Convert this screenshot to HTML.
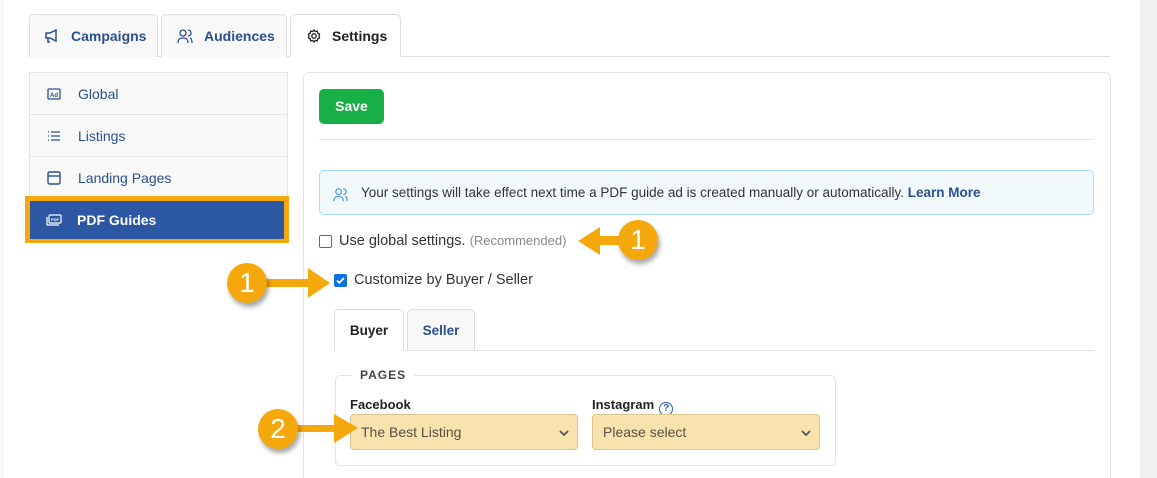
<!DOCTYPE html>
<html style="width:1157px;height:478px;overflow:hidden"><head><style>
*{box-sizing:border-box}
body{margin:0;width:1157px;height:478px;overflow:hidden;background:#fff;font-family:"Liberation Sans",sans-serif;position:relative;color:#333}
.a{position:absolute}
.tab{position:absolute;top:14px;height:43px;border:1px solid #ddd;border-bottom:none;border-radius:5px 5px 0 0;background:#f8f8f8;font-weight:bold;font-size:14px;color:#2a4f8f;display:flex;align-items:center}
.side{position:absolute;left:29px;width:259px;height:42px;border:1px solid #e3e3e3;border-top:none;background:#f8f8f8;font-size:14px;color:#2a4f8f;display:flex;align-items:center;padding-left:48px}
.side svg{position:absolute;left:17px}
.circ{position:absolute;width:40px;height:40px;border-radius:50%;background:#f4a80c;color:#fff;font-size:28px;text-align:center;line-height:40px;box-shadow:2px 4px 5px rgba(0,0,0,.35)}
.sel{position:absolute;top:414px;height:36px;background:#f8e2ae;border:1px solid #dcc58e;border-radius:4px;font-size:14px;color:#5a5040;padding:10px 10px;line-height:14px}
.sel svg{position:absolute;right:8px;top:14px}
</style></head><body>
<div class="a" style="left:0;top:0;width:4px;height:478px;background:#f6f6f6"></div>
<div class="a" style="left:1140px;top:0;width:17px;height:478px;background:#f0f0f0"></div>
<div class="a" style="left:29px;top:56px;width:1081px;height:1px;background:#ddd"></div>
<div class="tab" style="left:29px;width:129px;padding-left:14px"><svg width="16" height="14" viewBox="0 0 16 14" fill="none" stroke="#2a4f8f" stroke-width="1.5"><path d="M2 4h4l6-3v11l-6-3H2z M4 9v4h2"/></svg><span style="margin-left:11px">Campaigns</span></div>
<div class="tab" style="left:161px;width:126px;padding-left:15px"><svg width="16" height="16" viewBox="0 0 16 16" fill="none" stroke="#2a4f8f" stroke-width="1.3"><circle cx="6" cy="5" r="3"/><path d="M1 15c0-4 2-5 5-5s5 1 5 5M11 2a3 3 0 010 6M13 10c1.5.5 2 2 2 5"/></svg><span style="margin-left:11px">Audiences</span></div>
<div class="tab" style="left:290px;width:111px;height:43px;background:#fff;color:#222;padding-left:16px"><svg width="14" height="14" viewBox="0 0 14 14" fill="none" stroke="#222" stroke-width="1.3"><circle cx="7" cy="7" r="2.2"/><path d="M7 1l1.3 1.5 2-.4.4 2L12.5 5 12 7l.5 2-1.8.9-.4 2-2-.4L7 13l-1.3-1.5-2 .4-.4-2L1.5 9 2 7l-.5-2 1.8-.9.4-2 2 .4z"/></svg><span style="margin-left:11px">Settings</span></div>
<div class="a" style="left:290px;top:56px;width:111px;height:2px;background:#fff"></div>

<div class="side" style="top:72px;border-top:1px solid #e3e3e3;height:43px"><svg width="14" height="12" viewBox="0 0 14 12" fill="none" stroke="#2a4f8f" stroke-width="1.3"><rect x="1" y="1" width="12" height="10" rx="1"/><text x="3" y="9" font-size="6" fill="#2a4f8f" stroke="none" font-weight="bold">Ad</text></svg>Global</div>
<div class="side" style="top:115px"><svg width="14" height="12" viewBox="0 0 14 12" stroke="#2a4f8f" stroke-width="1.3"><path d="M1 2h1M1 6h1M1 10h1M4 2h9M4 6h9M4 10h9"/></svg>Listings</div>
<div class="side" style="top:157px"><svg width="14" height="14" viewBox="0 0 14 14" fill="none" stroke="#2a4f8f" stroke-width="1.4"><rect x="1" y="1" width="12" height="12" rx="1.5"/><path d="M1 5h12"/></svg>Landing Pages</div>
<div class="a" style="left:25px;top:196px;width:264px;height:47px;background:#f4a80c"></div>
<div class="a" style="left:30px;top:201px;width:254px;height:38px;background:#2b57a3;color:#fff;font-weight:bold;font-size:14px;display:flex;align-items:center;padding-left:47px"><svg style="position:absolute;left:16px" width="16" height="13" viewBox="0 0 16 13" fill="none" stroke="#fff" stroke-width="1.2"><rect x="3" y="1" width="12" height="8" rx="1"/><path d="M1 3v8h12"/><text x="5" y="7" font-size="4" fill="#fff" stroke="none">PDF</text></svg>PDF Guides</div>

<div class="a" style="left:303px;top:72px;width:808px;height:406px;border:1px solid #e3e3e3;border-bottom:none;border-radius:6px 6px 0 0"></div>
<div class="a" style="left:319px;top:89px;width:65px;height:35px;background:#19af47;border-radius:5px;color:#fff;font-weight:bold;font-size:14px;text-align:center;line-height:35px">Save</div>
<div class="a" style="left:319px;top:139px;width:775px;height:1px;background:#e3e3e3"></div>
<div class="a" style="left:319px;top:170px;width:775px;height:45px;background:#f2f9fd;border:1px solid #aad9f6;border-radius:5px;font-size:13.5px;color:#333;line-height:43px;padding-left:41px"><svg style="position:absolute;left:13px;top:16px" width="15" height="15" viewBox="0 0 16 16" fill="none" stroke="#4a9ce0" stroke-width="1.3"><circle cx="6" cy="5" r="3"/><path d="M1 15c0-4 2-5 5-5s5 1 5 5M11 2a3 3 0 010 6M13 10c1.5.5 2 2 2 5"/></svg>Your settings will take effect next time a PDF guide ad is created manually or automatically. <b style="color:#2a4f8f">Learn More</b></div>

<div class="a" style="left:319px;top:235px;width:13px;height:13px;border:1px solid #666;border-radius:2px;background:#fff"></div>
<div class="a" style="left:339px;top:233px;font-size:14.5px;color:#333">Use global settings. <span style="font-size:13px;color:#888">(Recommended)</span></div>
<div class="a" style="left:334px;top:274px;width:13px;height:13px;background:#0b6fe6;border-radius:2px"><svg width="13" height="13" viewBox="0 0 13 13"><path d="M3 6.5l2.3 2.3L10 4" stroke="#fff" stroke-width="1.8" fill="none"/></svg></div>
<div class="a" style="left:354px;top:272px;font-size:14.5px;color:#333">Customize by Buyer / Seller</div>

<div class="a" style="left:334px;top:350px;width:760px;height:1px;background:#e3e3e3"></div>
<div class="a" style="left:334px;top:309px;width:70px;height:42px;border:1px solid #ddd;border-bottom:none;border-radius:5px 5px 0 0;background:#fff;font-weight:bold;font-size:13.5px;color:#222;text-align:center;line-height:42px">Buyer</div>
<div class="a" style="left:407px;top:309px;width:68px;height:41px;border:1px solid #ddd;border-bottom:none;border-radius:5px 5px 0 0;background:#f8f8f8;font-weight:bold;font-size:13.5px;color:#2a4f8f;text-align:center;line-height:42px">Seller</div>

<div class="a" style="left:335px;top:375px;width:501px;height:91px;border:1px solid #e3e3e3;border-radius:5px"></div>
<div class="a" style="left:352px;top:368px;padding:0 8px;background:#fff;font-size:12px;letter-spacing:1px;font-weight:bold;color:#444">PAGES</div>
<div class="a" style="left:350px;top:397px;font-weight:bold;font-size:13px;color:#222">Facebook</div>
<div class="a" style="left:592px;top:397px;font-weight:bold;font-size:13px;color:#222">Instagram<span style="display:inline-block;margin-left:5px;width:14px;height:14px;border:1.3px solid #2a5fb0;border-radius:50%;font-size:10px;line-height:12px;text-align:center;color:#2a5fb0;vertical-align:-2px">?</span></div>
<div class="sel" style="left:350px;width:228px">The Best Listing<svg width="10" height="8" viewBox="0 0 10 8"><path d="M1 2l4 4 4-4" stroke="#555" stroke-width="1.8" fill="none"/></svg></div>
<div class="sel" style="left:592px;width:228px">Please select<svg width="10" height="8" viewBox="0 0 10 8"><path d="M1 2l4 4 4-4" stroke="#555" stroke-width="1.8" fill="none"/></svg></div>

<svg class="a" style="left:0;top:0" width="1157" height="478">
<g fill="#f4a80c">
<path d="M600 236h22v9h-22v10l-22-14 22-14z"/>
<path d="M262 279h46v-11l22 15-22 15v-11h-46z"/>
<path d="M292 425h42v-11l24 14-24 15v-11h-42z"/>
</g>
</svg>
<div class="circ" style="left:618px;top:220px">1</div>
<div class="circ" style="left:227px;top:263px">1</div>
<div class="circ" style="left:258px;top:409px">2</div>
</body></html>
